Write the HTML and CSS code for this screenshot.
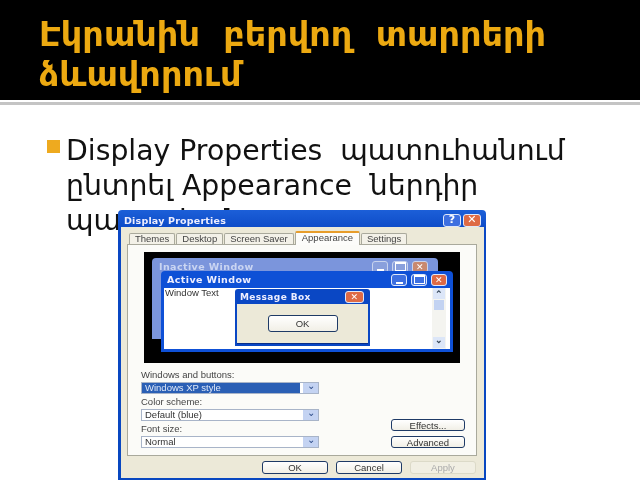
FILE: index.html
```html
<!DOCTYPE html>
<html lang="hy">
<head>
<meta charset="utf-8">
<title>Slide</title>
<link rel="stylesheet" href="styles.css">
</head>
<body>
<header class="head"><h1>Էկրանին  բերվող  տարրերի ձևավորում</h1></header>
<div class="rule"></div>
<main class="content">
<div class="bullet"></div>
<p class="text">Display Properties  պատուհանում ընտրել Appearance  ներդիր պատուհան</p>
</main>
<section class="dialog">
  <div class="titlebar"><span class="dtitle">Display Properties</span><span class="btns"><i class="cap help">?</i><i class="cap close">✕</i></span></div>
  <div class="body">
    <div class="tabs"><span class="tab">Themes</span><span class="tab">Desktop</span><span class="tab">Screen Saver</span><span class="tab on">Appearance</span><span class="tab">Settings</span></div>
    <div class="panel">
      <div class="preview">
        <div class="win inactive"><div class="wt"><span>Inactive Window</span><span class="btns"><i class="cap min"></i><i class="cap max"></i><i class="cap close">✕</i></span></div></div>
        <div class="win active"><div class="wt"><span>Active Window</span><span class="btns"><i class="cap min"></i><i class="cap max"></i><i class="cap close">✕</i></span></div>
          <div class="client"><span>Window Text</span><div class="sb"><b>⌃</b><em></em><b class="down">⌄</b></div></div></div>
        <div class="msg"><div class="wt"><span>Message Box</span><i class="cap close">✕</i></div><div class="msgbody"><span class="btn okm">OK</span></div></div>
      </div>
      <div class="controls">
        <div class="fields">
          <label>Windows and buttons:</label><div class="combo sel"><span>Windows XP style</span><i>⌄</i></div>
          <label>Color scheme:</label><div class="combo"><span>Default (blue)</span><i>⌄</i></div>
          <label>Font size:</label><div class="combo"><span>Normal</span><i>⌄</i></div>
        </div>
        <div class="side"><span class="btn">Effects...</span><span class="btn">Advanced</span></div>
      </div>
    </div>
    <div class="foot"><span class="btn">OK</span><span class="btn">Cancel</span><span class="btn off">Apply</span></div>
  </div>
</section>
</body>
</html>
```
FILE: styles.css
```css
*{box-sizing:border-box}
html,body{margin:0;padding:0}
body{width:640px;height:480px;overflow:hidden;background:#fff;position:relative;font-family:"DejaVu Sans",sans-serif}
.head{height:100px;background:#000;padding:15px 20px 0 39px}
.head h1{margin:0;font:bold 33.5px/40px "DejaVu Sans",sans-serif;color:#eca911;white-space:pre-wrap;width:590px;filter:blur(.4px)}
.rule{height:3px;margin-top:2px;background:#c4c4c4}
.content{display:flex;padding:35px 40px 0 47px;gap:6px}
.bullet{width:13px;height:13px;background:#eeaa1f;flex:none}
.text{margin:-7px 0 0;font-size:28.3px;line-height:35px;color:#111;white-space:pre-wrap;width:540px;filter:blur(.3px)}
.dialog{position:absolute;left:118px;top:210px;width:368px;height:270px;background:linear-gradient(#1c5fd8,#0a47c4 8%,#0847c0);border-radius:4px 4px 0 0;padding:0 2px 2px 3px;display:flex;flex-direction:column;font-family:"Liberation Sans",sans-serif;color:#222;filter:blur(.55px)}
.titlebar{height:17px;flex:none;display:flex;justify-content:space-between;align-items:center;padding:3px 3px 0 3px;color:#eef;font:bold 9.5px "DejaVu Sans",sans-serif;letter-spacing:.2px}
.btns{display:flex;gap:2px}
.cap{display:flex;width:18px;height:13px;border-radius:3px;border:1px solid #dfe8fa;background:#3d6fe0;color:#fff;font:bold 11px/12px "DejaVu Sans",sans-serif;font-style:normal;align-items:center;justify-content:center}
.cap.close{background:#de6a45}
.min::after{content:"";width:7px;height:2px;background:#fff;margin-top:6px}
.max::after{content:"";width:9px;height:6px;border:1px solid #fff;border-top-width:2px}
.body{flex:1;background:#ece9d8;display:flex;flex-direction:column;padding:4px 7px 0 6px;min-height:0}
.tabs{display:flex;height:13px;gap:1px;padding-left:2px;font-size:9.5px;align-items:flex-end;position:relative;z-index:1}
.tab{height:11px;padding:0 5px;background:#f3f1e8;border:1px solid #a9a99c;border-bottom:none;border-radius:2px 2px 0 0;line-height:9px;color:#444}
.tab.on{height:14px;background:#fcfcfa;border-top:2px solid #e79d2b;margin-bottom:-1px;line-height:9px;padding:0 6px}
.panel{height:212px;flex:none;background:#fbfbf8;border:1px solid #a9a99c;padding:7px 16px 0 16px;display:flex;flex-direction:column}
.preview{position:relative;height:111px;background:#000;flex:none}
.win{position:absolute;background:#fff;border-radius:4px 4px 0 0}
.inactive{left:8px;top:6px;width:286px;height:81px;background:#7b95dc;padding:0 7px 3px 4px;color:#cfd9f0}
.active{left:17px;top:19px;width:292px;height:81px;background:#0e50d6;padding:0 3px}
.wt{height:17px;display:flex;justify-content:space-between;align-items:center;font:bold 9.5px "DejaVu Sans",sans-serif;color:#eef;letter-spacing:.4px;padding:0 3px 0 3px}
.inactive .wt{color:#cad5f2}
.wt .cap{width:16px;height:12px;font-size:9px}
.wt .btns{gap:4px}
.inactive .cap{background:#8aa0dc;border-color:#c9d4ee}
.inactive .cap.close{background:#c9896f}
.client{background:#fff;height:61px;display:flex;justify-content:space-between;font-size:9.5px;line-height:9px;color:#333;padding-left:1px}
.sb{width:14px;background:#f4f4f0;display:flex;flex-direction:column;align-items:center;font-size:9px;color:#345;position:relative;margin-right:4px}
.sb b{height:11px;width:12px;background:#dce6f8;line-height:12px;text-align:center}
.sb em{width:10px;height:10px;background:#c3d3f2;margin-top:1px}
.sb .down{position:absolute;bottom:1px;line-height:6px}
.msg{position:absolute;left:91px;top:37px;width:135px;height:57px;background:#0a47c4;padding:0 2px 2px;border-radius:3px 3px 0 0}
.msg .wt{height:15px;font-size:9px}
.msg .cap{width:19px;height:12px;font-size:9px;margin-right:1px}
.msgbody{height:40px;background:#ece9d8;display:flex;align-items:center;justify-content:center;border-bottom:1px solid #0a2f8a}
.btn{display:flex;align-items:center;justify-content:center;width:74px;height:12px;border:1px solid #1e3a66;border-radius:3px;background:linear-gradient(#fff,#f1efe6);font-size:9.5px;color:#333}
.okm{width:70px;height:17px}
.controls{display:flex;justify-content:space-between;align-items:flex-end;padding-top:6px;margin-left:-3px;margin-right:-5px}
.fields{width:178px;display:flex;flex-direction:column;font-size:9.5px}
.fields label{height:13px;line-height:11px;color:#444}
.combo{height:12px;background:#fff;border:1px solid #a8b4c8;display:flex;justify-content:space-between;line-height:10px;padding-left:3px;margin-bottom:2px;color:#333;flex:none}
.combo.sel{padding:0}
.combo.sel span{flex:1;background:#2a5fb5;color:#dfe8f8;padding-left:3px;line-height:10px;margin-right:3px}
.combo i{width:15px;background:#c4d3f2;font-style:normal;text-align:center;line-height:6px;font-size:10px;color:#2a4a88}
.side{display:flex;flex-direction:column;gap:5px;margin-bottom:2px}
.foot{display:flex;justify-content:flex-end;gap:8px;padding:5px 1px 0 0}
.foot .btn{width:66px;height:13px}
.foot .off{background:#f1efe3;border-color:#dcdac8;color:#aaa}
```
